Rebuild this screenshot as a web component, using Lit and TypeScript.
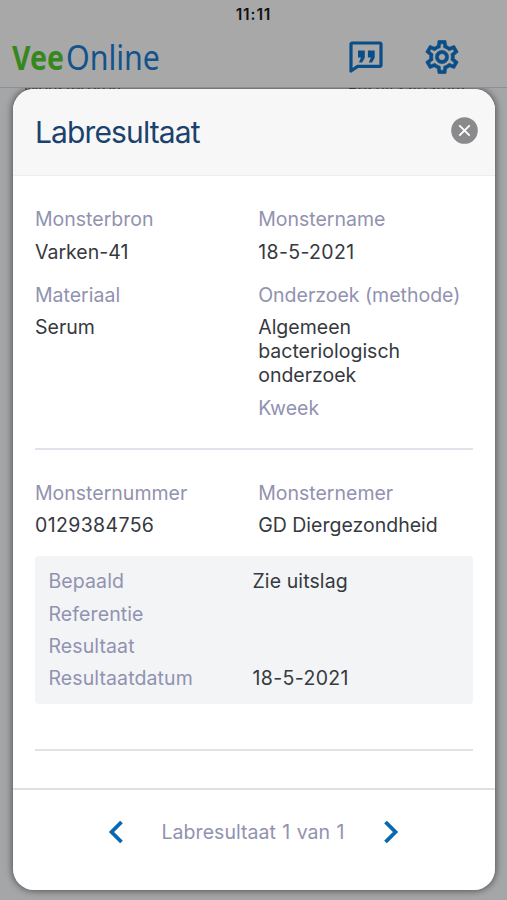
import { LitElement, html, css } from "lit";
import { customElement, property } from "lit/decorators.js";
import { classMap } from "lit/directives/class-map.js";

const numeric = (text: string) => /^[\d-]+$/.test(text);

@customElement("lab-field")
class LabField extends LitElement {
  @property() label = "";
  @property() value = "";
  @property() note = "";
  static styles = css`
    :host { display: flex; flex-direction: column; gap: 8.5px; line-height: 24px; }
    .label, .note { color: #9192b0; }
    .value { color: #36393e; }
    .numeric { letter-spacing: 0.36px; }
  `;
  render() {
    return html`
      <div class="label">${this.label}</div>
      <div class=${classMap({ value: true, numeric: numeric(this.value) })}>${this.value}</div>
      ${this.note ? html`<div class="note">${this.note}</div>` : ""}
    `;
  }
}

@customElement("app-root")
class AppRoot extends LitElement {
  static styles = css`
    :host {
      display: block; position: relative; width: 507px; height: 900px; overflow: hidden;
      background: #a4a6a8; font-family: Inter, "Liberation Sans", sans-serif;
      font-size: 19.5px;
    }
    * { box-sizing: border-box; }
    .page { height: 100%; }
    .bar { position: relative; z-index: 1; height: 88px; background: #a8a8a8; border-bottom: 1px solid #8f8f91; }
    .time { height: 30px; text-align: center; font-size: 15.5px; line-height: 30px; font-weight: 600; color: #111; letter-spacing: 0.9px; }
    .brand { display: flex; align-items: center; height: 54px; padding: 0 48px 0 12px; }
    .logo { width: 148px; height: 40px; margin-right: auto; overflow: visible; }
    .logo text { font-family: "Noto Sans", sans-serif; font-size: 34px; }
    .vee { fill: #37871f; font-weight: 700; }
    .online { fill: #13528a; }
    .chat { width: 34px; height: 33px; margin-right: 42px; }
    .gear { width: 34px; height: 34px; }
    .behind { display: flex; justify-content: space-between; padding: 0 42px 0 24px; font-size: 16px; line-height: 20px; margin-top: -10px; color: #4c4d50; }
    .modal {
      position: absolute; left: 13px; top: 89px; width: 482px; height: 800.5px;
      border-radius: 21px; background: #fff; overflow: hidden;
      display: flex; flex-direction: column;
    }
    .shadow { position: absolute; left: 13px; top: 89px; width: 482px; height: 800.5px; border-radius: 21px; box-shadow: 0 0 7px 1px rgba(0,0,0,.5); }
    .head { display: flex; align-items: center; justify-content: space-between; height: 87px; padding: 0 17px 3px 22px; background: #f7f7f8; border-bottom: 1px solid #ededee; }
    .title { margin: 0; padding-top: 3px; font-size: 30px; font-weight: 400; color: #1b426d; letter-spacing: -0.88px; }
    .close { width: 27px; height: 27px; }
    .body { flex: 1; padding: 31px 22px 0; }
    .pair { display: grid; grid-template-columns: 223.2px 1fr; }
    .pair + .pair { margin-top: 19px; }
    .rule { height: 2px; background: #e1e2ec; }
    .r1 { margin: 28px 0 31px; }
    .r2 { margin-top: 45.5px; background: #e1e2e5; }
    .box { margin-top: 18.5px; height: 148px; border-radius: 4px; background: #f2f4f6; padding: 13.8px 13.5px; display: grid; grid-template-columns: 204px 1fr; grid-auto-rows: 32.4px; line-height: 24px; }
    .key { color: #9192b0; letter-spacing: 0.1px; }
    .val { color: #36393e; letter-spacing: 0.1px; }
    .val.numeric { letter-spacing: 0.36px; }
    .foot { height: 102px; border-top: 2px solid #dfe0e4; display: flex; align-items: center; justify-content: center; padding: 0 2px 16px 0; color: #9192b0; }
    .count { width: 187px; margin: 0 36px; white-space: nowrap; text-align: center; letter-spacing: 0.05px; word-spacing: 0.8px; }
    .arrow { width: 16px; height: 24px; }
  `;

  rows = [["Bepaald", "Zie uitslag"], ["Referentie", ""], ["Resultaat", ""], ["Resultaatdatum", "18-5-2021"]];

  arrow(d: string) {
    return html`<svg class="arrow" viewBox="0 0 16 24"><path d=${d} fill="none" stroke="#0868b0" stroke-width="3.8"/></svg>`;
  }

  render() {
    return html`
      <div class="page">
        <div class="bar">
          <div class="time">11:11</div>
          <div class="brand">
            <svg class="logo" viewBox="0 0 148 40">
              <text class="vee" x="0" y="33" textLength="52" lengthAdjust="spacingAndGlyphs">Vee</text>
              <text class="online" x="54" y="33" textLength="94" lengthAdjust="spacingAndGlyphs">Online</text>
            </svg>
            <svg class="chat" viewBox="0 0 34 33" fill="none" stroke="#0b4e87" stroke-width="3.2" stroke-linejoin="round">
              <path d="M2 30V3.2Q2 2 3.2 2H30.6Q32 2 32 3.4V24Q32 25.4 30.6 25.4H8.6Z"/>
              <path fill="#0b4e87" stroke="none" d="M9 9.5h6.8v7.2l-2.6 4.8H9.9l2.1-5H9zM18.9 9.5h6.8v7.2l-2.6 4.8h-3.3l2.1-5h-3z"/>
            </svg>
            <svg class="gear" viewBox="1.8 1.8 20.4 20.4" fill="#0b4e87" stroke="#0b4e87" stroke-width="0.25">
              <path d="M19.43 12.98c.04-.32.07-.64.07-.98 0-.34-.03-.66-.07-.98l2.11-1.65c.19-.15.24-.42.12-.64l-2-3.46c-.09-.16-.26-.25-.44-.25-.06 0-.12.01-.17.03l-2.49 1c-.52-.4-1.08-.73-1.69-.98l-.38-2.65C14.46 2.18 14.25 2 14 2h-4c-.25 0-.46.18-.49.42l-.38 2.65c-.61.25-1.17.59-1.69.98l-2.49-1c-.06-.02-.12-.03-.18-.03-.17 0-.34.09-.43.25l-2 3.46c-.13.22-.07.49.12.64l2.11 1.65c-.04.32-.07.65-.07.98 0 .33.03.66.07.98l-2.11 1.65c-.19.15-.24.42-.12.64l2 3.46c.09.16.26.25.44.25.06 0 .12-.01.17-.03l2.49-1c.52.4 1.08.73 1.69.98l.38 2.65c.03.24.24.42.49.42h4c.25 0 .46-.18.49-.42l.38-2.65c.61-.25 1.17-.59 1.69-.98l2.49 1c.06.02.12.03.18.03.17 0 .34-.09.43-.25l2-3.46c.12-.22.07-.49-.12-.64l-2.11-1.65zm-1.98-1.71c.04.31.05.52.05.73 0 .21-.02.43-.05.73l-.14 1.13.89.7 1.08.84-.7 1.21-1.27-.51-1.04-.42-.9.68c-.43.32-.84.56-1.25.73l-1.06.43-.16 1.13-.2 1.35h-1.4l-.19-1.35-.16-1.13-1.06-.43c-.43-.18-.83-.41-1.23-.71l-.91-.7-1.06.43-1.27.51-.7-1.21 1.08-.84.89-.7-.14-1.13c-.03-.31-.05-.54-.05-.74s.02-.43.05-.73l.14-1.13-.89-.7-1.08-.84.7-1.21 1.27.51 1.04.42.9-.68c.43-.32.84-.56 1.25-.73l1.06-.43.16-1.13.2-1.35h1.39l.19 1.35.16 1.13 1.06.43c.43.18.83.41 1.23.71l.91.7 1.06-.43 1.27-.51.7 1.21-1.07.85-.89.7.14 1.13zM12 8c-2.21 0-4 1.79-4 4s1.79 4 4 4 4-1.79 4-4-1.79-4-4-4zm0 6c-1.1 0-2-.9-2-2s.9-2 2-2 2 .9 2 2-.9 2-2 2z"/>
            </svg>
          </div>
        </div>
        <div class="behind"><span>Monsterbron</span><span>Resultaatdatum</span></div>
      </div>
      <div class="shadow"></div>
      <div class="modal">
        <div class="head">
          <h1 class="title">Labresultaat</h1>
          <svg class="close" viewBox="0 0 27 27"><circle cx="13.5" cy="13.5" r="13.3" fill="#8a8a8c"/><path d="M8.3 8.3L18.7 18.7M18.7 8.3L8.3 18.7" stroke="#fff" stroke-width="1.9"/></svg>
        </div>
        <div class="body">
          <div class="pair">
            <lab-field label="Monsterbron" value="Varken-41"></lab-field>
            <lab-field label="Monstername" value="18-5-2021"></lab-field>
          </div>
          <div class="pair">
            <lab-field label="Materiaal" value="Serum"></lab-field>
            <lab-field label="Onderzoek (methode)" value="Algemeen bacteriologisch onderzoek" note="Kweek"></lab-field>
          </div>
          <div class="rule r1"></div>
          <div class="pair">
            <lab-field label="Monsternummer" value="0129384756"></lab-field>
            <lab-field label="Monsternemer" value="GD Diergezondheid"></lab-field>
          </div>
          <div class="box">
            ${this.rows.map(([k, v]) => html`<div class="key">${k}</div><div class=${classMap({ val: true, numeric: numeric(v) })}>${v}</div>`)}
          </div>
          <div class="rule r2"></div>
        </div>
        <div class="foot">
          ${this.arrow("M13.5 2L3.5 12L13.5 22")}
          <div class="count">Labresultaat 1 van 1</div>
          ${this.arrow("M2.5 2L12.5 12L2.5 22")}
        </div>
      </div>
    `;
  }
}
